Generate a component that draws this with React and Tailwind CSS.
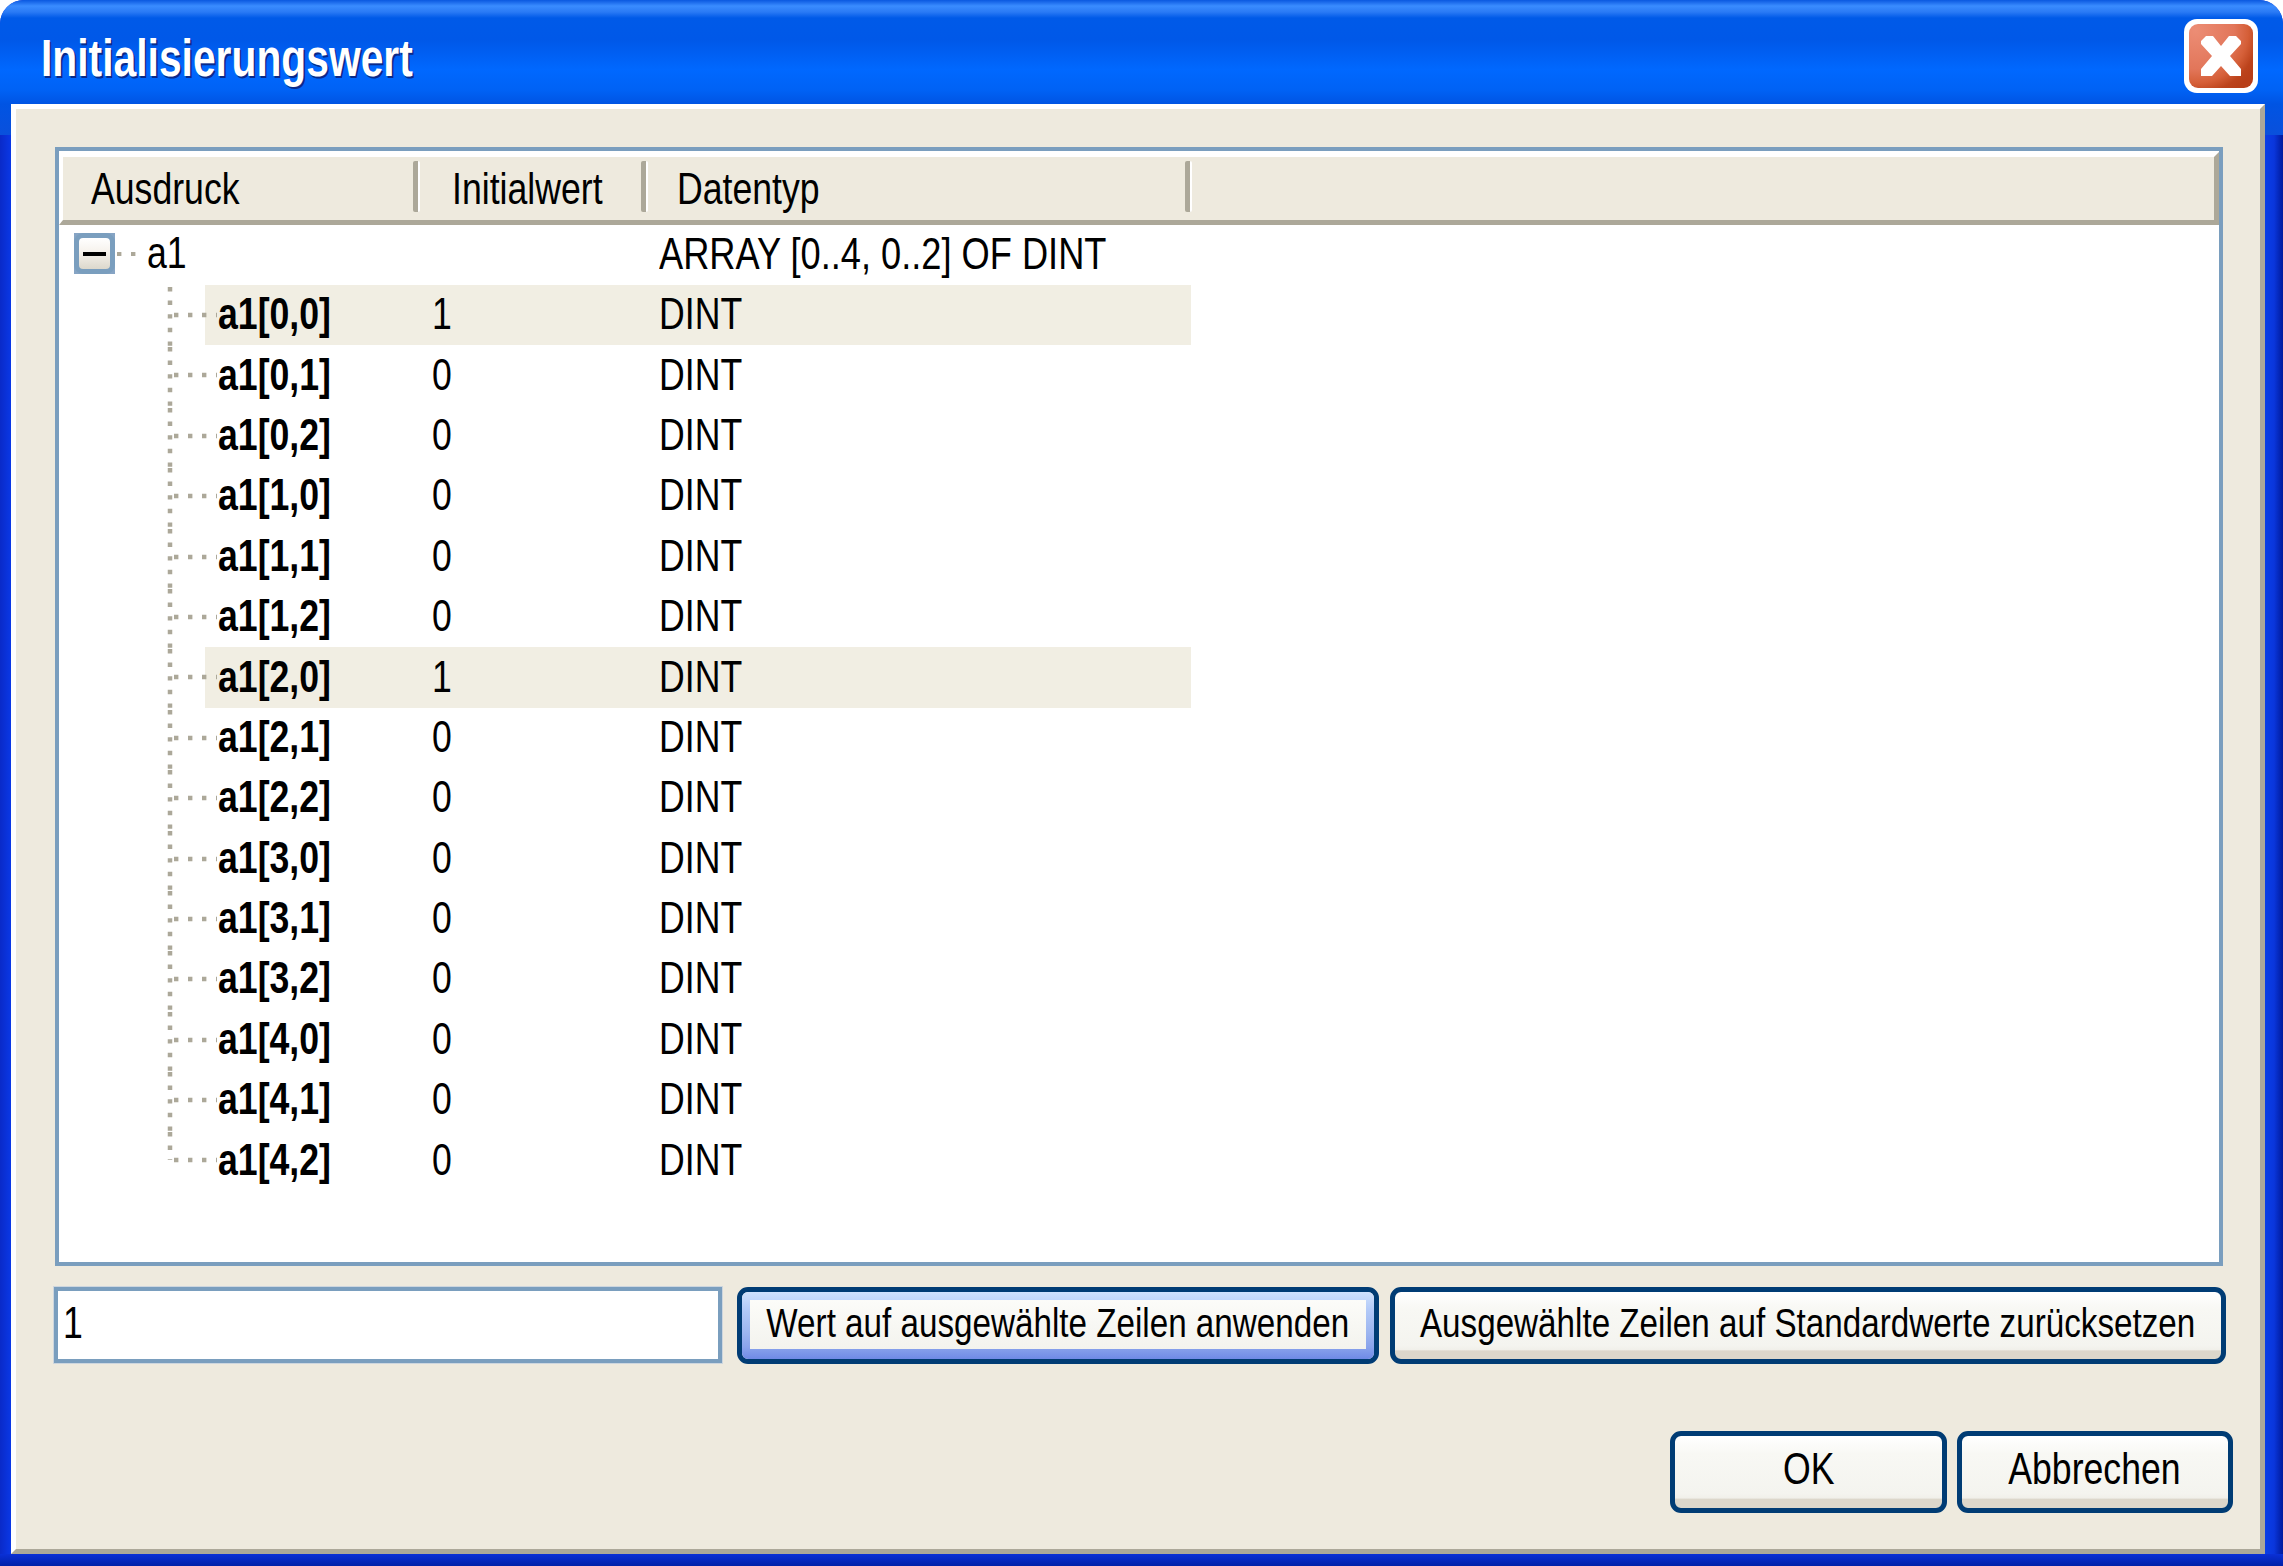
import React from 'react';

const rows = [
  { name: 'a1[0,0]', value: '1', selected: true },
  { name: 'a1[0,1]', value: '0' },
  { name: 'a1[0,2]', value: '0' },
  { name: 'a1[1,0]', value: '0' },
  { name: 'a1[1,1]', value: '0' },
  { name: 'a1[1,2]', value: '0' },
  { name: 'a1[2,0]', value: '1', selected: true },
  { name: 'a1[2,1]', value: '0' },
  { name: 'a1[2,2]', value: '0' },
  { name: 'a1[3,0]', value: '0' },
  { name: 'a1[3,1]', value: '0' },
  { name: 'a1[3,2]', value: '0' },
  { name: 'a1[4,0]', value: '0' },
  { name: 'a1[4,1]', value: '0' },
  { name: 'a1[4,2]', value: '0' },
];

// the reference is stretched vertically, so every label is squeezed in x
function Narrow({ children, className = '' }) {
  return <span className={`inline-block whitespace-nowrap origin-left scale-x-[0.81] ${className}`}>{children}</span>;
}

function CloseIcon() {
  return (
    <svg width="74" height="74" viewBox="0 0 74 74" className="block">
      <defs>
        <radialGradient id="closeRed" cx="0.1" cy="0.1" r="1.1">
          <stop offset="0" stopColor="#ec8d75" />
          <stop offset="0.55" stopColor="#e2765a" />
          <stop offset="0.75" stopColor="#d55f38" />
          <stop offset="0.9" stopColor="#bc431c" />
          <stop offset="1" stopColor="#b83e18" />
        </radialGradient>
      </defs>
      <rect x="0" y="0" width="74" height="74" rx="13" fill="#ffffff" />
      <rect x="5" y="5" width="64" height="64" rx="9" fill="url(#closeRed)" />
      <path d="M17 22 L22 17 H29 L37 27 L45 17 H52 L57 22 V25 L46 37 L57 50 V57 H46 L37 47 L28 57 H17 V50 L28 37 L17 25 Z" fill="#ffffff" />
    </svg>
  );
}

function TreeConnector({ last }) {
  return (
    <svg width="60" height="61" viewBox="0 0 60 61" className="absolute left-[103px] top-0 overflow-visible">
      <path d={last ? 'M8 2 V30' : 'M8 2 V61'} stroke="#aca899" strokeWidth="4.5" strokeDasharray="4.4 9.2" fill="none" />
      <path d="M12 30 H55" stroke="#aca899" strokeWidth="4.5" strokeDasharray="4.4 9.6" fill="none" />
    </svg>
  );
}

function Button({ children, focused, className = '' }) {
  return (
    <button className={`flex items-center justify-center overflow-hidden rounded-[11px] border-[5px] border-[#003c74] bg-[linear-gradient(180deg,#ffffff_0%,#f8f8f4_25%,#f4f4ef_80%,#f1f0ea_86%,#dcd7cb_88%,#dcd7cb_100%)] text-[#000000] font-['Liberation_Sans',sans-serif] ${className}`}>
      {focused ? (
        <span className="flex h-full w-full bg-[linear-gradient(180deg,#cfe2fd_0%,#b4cbf8_25%,#9db6f0_60%,#8aa4ec_82%,#6f8ae6_100%)] pb-[10px] pl-[8px] pr-[8px] pt-[8px]">
          <span className="flex h-full w-full items-center justify-center bg-[linear-gradient(180deg,#fcfcf9_0%,#f3f3ee_100%)]">
            {children}
          </span>
        </span>
      ) : children}
    </button>
  );
}

function HeaderSeparators() {
  return (
    <>
      {[354, 582, 1126].map((left) => (
        <div
          key={left}
          className="absolute top-[-64px] h-[51px] w-[7px] rounded-[2px] border-r-2 border-white bg-[#aca899]"
          style={{ left }}
        />
      ))}
    </>
  );
}

export default function App() {
  return (
    <div className="flex h-[1566px] w-[2283px] flex-col overflow-hidden rounded-t-[24px] bg-[#0831d9] font-['Liberation_Sans',sans-serif] text-black">
      {/* Title bar */}
      <div className="flex h-[104px] shrink-0 items-start bg-[linear-gradient(180deg,#0a58e0_0px,#3a8cff_6px,#2a7af5_12px,#005ae8_18px,#0058e8_40px,#0068ff_70px,#0062f5_90px,#0054e3_104px)] pl-[41px] pr-[25px]">
        <span className="mt-[28px] inline-block origin-left scale-x-[0.8] whitespace-nowrap text-[51px] font-bold leading-[62px] text-white [text-shadow:2px_2px_0_#0a2a8a]">
          Initialisierungswert
        </span>
        <div className="ml-auto mt-[19px]">
          <CloseIcon />
        </div>
      </div>

      <div className="flex min-h-0 flex-1">
        {/* Left frame */}
        <div className="flex w-[11px] shrink-0 flex-col">
          <div className="h-[31px] bg-[linear-gradient(180deg,#0054e3,#0a50dc)]" />
          <div className="flex-1 bg-[linear-gradient(90deg,#0a2ac8,#0a38e6)]" />
        </div>

        {/* Client area */}
        <div className="flex min-w-0 flex-1 flex-col border-[5px] border-t-white border-l-white border-r-[#aca899] border-b-[#aca899] bg-[#eeeade] pl-[38px] pr-[27px] pt-[38px]">
          {/* Tree table */}
          <div className="ml-px h-[1119px] w-[2168px] shrink-0 border-[4px] border-[#7a9ebe] bg-white pt-px">
            <div className="flex h-[73px] items-center border-[5px] border-l-[4px] border-t-white border-l-white border-r-[#aca899] border-b-[#aca899] bg-[#eeeade] text-[44px] leading-none">
              <div className="w-[350px] pl-[28px]"><Narrow>Ausdruck</Narrow></div>
              <div className="w-[228px] pl-[39px]"><Narrow>Initialwert</Narrow></div>
              <div className="w-[546px] pl-[36px]"><Narrow>Datentyp</Narrow></div>
            </div>
            <div className="relative">
              <HeaderSeparators />
              <div className="relative flex h-[60px] items-center pb-[3px] text-[44px] leading-none">
                <div className="ml-[15px] flex h-[41px] w-[41px] items-center justify-center bg-[#86a4c4]">
                  <div className="flex h-[41px] w-[41px] items-center justify-center rounded-[9px] border-[5px] border-[#7a9ebe] bg-[linear-gradient(180deg,#ffffff_0%,#f6f2ec_45%,#dcd8cc_100%)]">
                    <div className="h-[4px] w-[23px] bg-black" />
                  </div>
                </div>
                <svg width="20" height="4" viewBox="0 0 20 4" className="ml-[2px]">
                  <path d="M0 2 H20" stroke="#aca899" strokeWidth="4.5" strokeDasharray="4.4 9.6" />
                </svg>
                <div className="ml-[10px] w-[512px] -translate-y-[1px]"><Narrow>a1</Narrow></div>
                <Narrow className="scale-x-[0.823]">ARRAY [0..4, 0..2] OF DINT</Narrow>
              </div>
              {rows.map((row, i) => (
                <div key={row.name} className="relative flex h-[60.4px] items-center text-[44px] leading-none">
                  <TreeConnector last={i === rows.length - 1} />
                  <div className={`ml-[146px] flex h-[60.4px] w-[986px] items-center pb-[2px] ${row.selected ? 'bg-[#f1eee3]' : ''}`}>
                    <div className="w-[227px] pl-[13px] font-bold"><Narrow>{row.name}</Narrow></div>
                    <div className="w-[227px]"><Narrow>{row.value}</Narrow></div>
                    <Narrow>DINT</Narrow>
                  </div>
                </div>
              ))}
            </div>
          </div>

          {/* Value row */}
          <div className="mt-[21px] flex h-[77px] shrink-0">
            <div className="flex h-[76px] w-[668px] items-center border-[4px] border-[#7a9ebe] bg-white pb-[4px] pl-[5px] text-[44px] leading-none shadow-[0_0_0_1px_#cdd6de]">
              <Narrow>1</Narrow>
            </div>
            <Button focused className="ml-[15px] h-[77px] w-[642px] text-[41px] leading-none">
              <span className="inline-block origin-center -translate-y-[1px] scale-x-[0.81] whitespace-nowrap">Wert auf ausgewählte Zeilen anwenden</span>
            </Button>
            <Button className="ml-[11px] h-[77px] w-[836px] pb-[5px] text-[41px] leading-none">
              <span className="inline-block origin-center scale-x-[0.81] whitespace-nowrap">Ausgewählte Zeilen auf Standardwerte zurücksetzen</span>
            </Button>
          </div>

          {/* Dialog buttons */}
          <div className="mt-[67px] flex justify-end gap-[10px]">
            <Button className="h-[82px] w-[277px] pb-[7px] text-[44px] leading-none">
              <span className="inline-block origin-center scale-x-[0.81]">OK</span>
            </Button>
            <Button className="h-[82px] w-[276px] pb-[7px] pr-[2px] text-[44px] leading-none">
              <span className="inline-block origin-center scale-x-[0.81]">Abbrechen</span>
            </Button>
          </div>
        </div>

        {/* Right frame */}
        <div className="flex w-[18px] shrink-0 flex-col">
          <div className="h-[31px] bg-[linear-gradient(180deg,#0054e3,#0a50dc)]" />
          <div className="flex-1 bg-[linear-gradient(90deg,#0a3ee6_0%,#0a36dc_50%,#001a9c_100%)]" />
        </div>
      </div>

      {/* Bottom frame */}
      <div className="h-[12px] shrink-0 bg-[linear-gradient(180deg,#0a30d6,#0020a8)]" />
    </div>
  );
}
